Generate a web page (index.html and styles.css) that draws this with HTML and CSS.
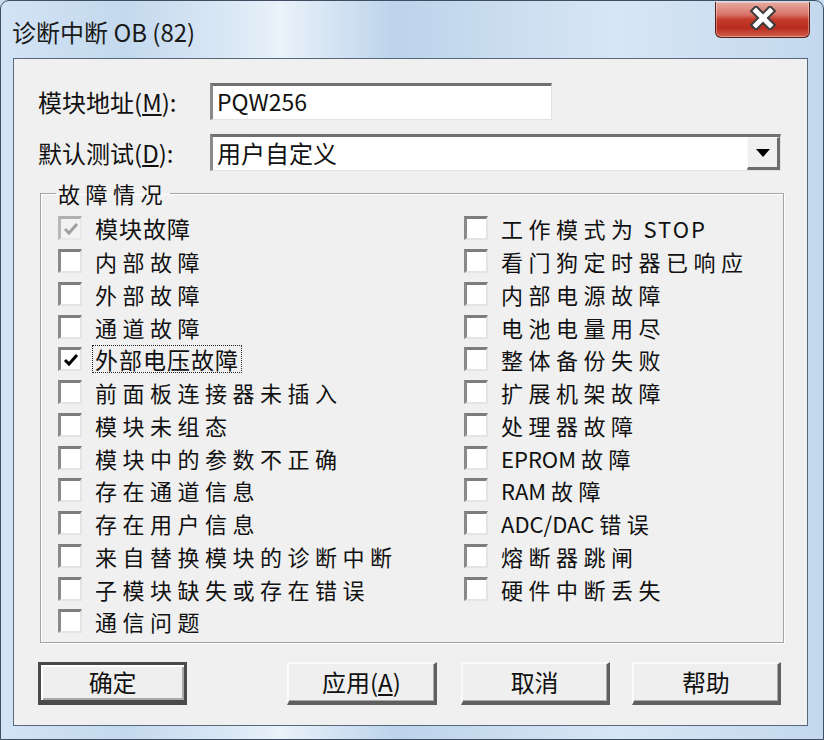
FILE: index.html
```html
<!DOCTYPE html>
<html lang="zh-CN">
<head>
<meta charset="utf-8">
<title>诊断中断 OB (82)</title>
<link rel="stylesheet" href="styles.css">
</head>
<body>
<div class="window">
  <div class="titlebar">
    <span class="title">诊断中断 OB (82)</span>
    <div class="close">
      <svg width="30" height="24" viewBox="0 0 30 24"><path d="M8 5 L22 19 M22 5 L8 19" stroke="#3d3d3d" stroke-width="9" stroke-linecap="square"/><path d="M8 5 L22 19 M22 5 L8 19" stroke="#ffffff" stroke-width="5" stroke-linecap="square"/></svg>
    </div>
  </div>
  <div class="client">
    <div class="field-row">
      <label class="field-label">模块地址(<u>M</u>):</label>
      <div class="textbox">PQW256</div>
    </div>
    <div class="field-row row2">
      <label class="field-label">默认测试(<u>D</u>):</label>
      <div class="combo">
        <span class="combo-text">用户自定义</span>
        <span class="combo-btn"><svg width="14" height="8" viewBox="0 0 14 8"><path d="M0 0 H14 L7 8 Z" fill="#000"/></svg></span>
      </div>
    </div>
    <fieldset class="group">
      <legend class="group-title">故障情况</legend>
      <div class="cols">
        <div class="col col-left">
          <div class="item"><span class="box disabled checked"><svg width="18" height="18" viewBox="0 0 18 18"><path d="M3 9 L7 13 L15 4" stroke="#a0a0a0" stroke-width="3" fill="none"/></svg></span><span class="lbl tight gray-ish">模块故障</span></div>
          <div class="item"><span class="box"></span><span class="lbl">内部故障</span></div>
          <div class="item"><span class="box"></span><span class="lbl">外部故障</span></div>
          <div class="item"><span class="box"></span><span class="lbl">通道故障</span></div>
          <div class="item"><span class="box checked"><svg width="18" height="18" viewBox="0 0 18 18"><path d="M3 9 L7 13 L15 4" stroke="#000" stroke-width="3" fill="none"/></svg></span><span class="lbl tight focus">外部电压故障</span></div>
          <div class="item"><span class="box"></span><span class="lbl">前面板连接器未插入</span></div>
          <div class="item"><span class="box"></span><span class="lbl">模块未组态</span></div>
          <div class="item"><span class="box"></span><span class="lbl">模块中的参数不正确</span></div>
          <div class="item"><span class="box"></span><span class="lbl">存在通道信息</span></div>
          <div class="item"><span class="box"></span><span class="lbl">存在用户信息</span></div>
          <div class="item"><span class="box"></span><span class="lbl">来自替换模块的诊断中断</span></div>
          <div class="item"><span class="box"></span><span class="lbl">子模块缺失或存在错误</span></div>
          <div class="item"><span class="box"></span><span class="lbl">通信问题</span></div>
        </div>
        <div class="col col-right">
          <div class="item"><span class="box"></span><span class="lbl">工作模式为<span class="latin"> </span><span class="latin wide">STOP</span></span></div>
          <div class="item"><span class="box"></span><span class="lbl">看门狗定时器已响应</span></div>
          <div class="item"><span class="box"></span><span class="lbl">内部电源故障</span></div>
          <div class="item"><span class="box"></span><span class="lbl">电池电量用尽</span></div>
          <div class="item"><span class="box"></span><span class="lbl">整体备份失败</span></div>
          <div class="item"><span class="box"></span><span class="lbl">扩展机架故障</span></div>
          <div class="item"><span class="box"></span><span class="lbl">处理器故障</span></div>
          <div class="item"><span class="box"></span><span class="lbl"><span class="latin">EPROM </span>故障</span></div>
          <div class="item"><span class="box"></span><span class="lbl"><span class="latin">RAM </span>故障</span></div>
          <div class="item"><span class="box"></span><span class="lbl"><span class="latin">ADC/DAC </span>错误</span></div>
          <div class="item"><span class="box"></span><span class="lbl">熔断器跳闸</span></div>
          <div class="item"><span class="box"></span><span class="lbl">硬件中断丢失</span></div>
        </div>
      </div>
    </fieldset>
    <div class="buttons">
      <button class="btn default">确定</button>
      <button class="btn apply">应用(<u>A</u>)</button>
      <button class="btn cancel">取消</button>
      <button class="btn help">帮助</button>
    </div>
  </div>
</div>
</body>
</html>
```
FILE: styles.css
```css
html, body {
  margin: 0;
  padding: 0;
}
body {
  width: 824px;
  height: 740px;
  overflow: hidden;
  background: #c9dcef;
  font-family: "Noto Sans CJK SC", "Noto Sans", sans-serif;
  color: #111;
}
.window {
  width: 824px;
  height: 740px;
  box-sizing: border-box;
  border: 1px solid #3e4f63;
  border-radius: 9px 9px 0 0;
  background: linear-gradient(90deg, #d2e3f4 0%, #c4d9ee 15%, #dbe8f5 28%, #eaf2fa 34%, #bcd3eb 48%, #c9dcef 60%, #d7e6f4 75%, #c3d8ee 100%);
  display: flex;
  flex-direction: column;
  padding: 0 15px 13px 12px;
}
.titlebar {
  height: 57px;
  flex: none;
  display: flex;
  align-items: flex-start;
  margin: 0 -15px 0 -12px;
  padding: 0 13px 0 11px;
}
.title {
  font-size: 24px;
  line-height: 28px;
  padding-top: 17px;
  color: #1a1a1a;
}
.close {
  margin-left: auto;
  margin-top: 1px;
  width: 95px;
  height: 36px;
  box-sizing: border-box;
  border: 1px solid #5a1e18;
  border-top: none;
  border-radius: 0 0 6px 6px;
  background: linear-gradient(180deg, #e5aaa0 0%, #d9776b 35%, #c33b2c 50%, #b82d1f 75%, #d2604e 100%);
  box-shadow: inset 0 0 0 1px rgba(255,255,255,0.35);
  display: flex;
  align-items: center;
  justify-content: center;
  padding-bottom: 3px;
}
.client {
  flex: 1;
  border: 1px solid #56687c;
  background: #f0f0f0;
  padding: 0 26px 0 24px;
  box-sizing: border-box;
}
.field-row {
  display: flex;
  align-items: center;
  margin-top: 24px;
  height: 37px;
}
.field-row.row2 {
  margin-top: 14px;
}
.field-label {
  width: 172px;
  flex: none;
  font-size: 24px;
  line-height: 28px;
}
.textbox {
  width: 342px;
  height: 37px;
  box-sizing: border-box;
  background: #fff;
  border-style: solid;
  border-width: 3px 1px 1px 3px;
  border-color: #707070 #e2e2e2 #e2e2e2 #8a8a8a;
  font-size: 23px;
  line-height: 31px;
  padding-left: 4px;
}
.combo {
  width: 571px;
  height: 37px;
  box-sizing: border-box;
  background: #fff;
  border-style: solid;
  border-width: 3px 1px 1px 3px;
  border-color: #707070 #e2e2e2 #e2e2e2 #8a8a8a;
  display: flex;
  align-items: stretch;
}
.combo-text {
  flex: 1;
  font-size: 24px;
  line-height: 31px;
  padding-left: 4px;
}
.combo-btn {
  width: 33px;
  box-sizing: border-box;
  background: #f0f0f0;
  border-style: solid;
  border-width: 1px 3px 3px 1px;
  border-color: #f9f9f9 #6d6d6d #6d6d6d #f9f9f9;
  display: flex;
  align-items: center;
  justify-content: center;
}
.group {
  width: 744px;
  box-sizing: border-box;
  margin: 9px 0 0 2px;
  padding: 6px 0 4px 17px;
  border: 1px solid #a4a4a4;
  box-shadow: inset 1px 1px 0 #fff, 1px 1px 0 #fff;
  min-width: 0;
}
.group-title {
  font-size: 22px;
  line-height: 26px;
  letter-spacing: 5.5px;
  padding: 0 2px 0 2px;
  margin-left: -2px;
}
.cols {
  display: grid;
  grid-template-columns: 406px 1fr;
}
.col {
  display: flex;
  flex-direction: column;
}
.item {
  height: 32.75px;
  display: flex;
  align-items: center;
}
.box {
  width: 24px;
  height: 24px;
  flex: none;
  box-sizing: border-box;
  background: #fff;
  border-style: solid;
  border-width: 3px 2px 2px 3px;
  border-color: #7d7d7d #e4e4e4 #e4e4e4 #8a8a8a;
  display: flex;
  align-items: center;
  justify-content: center;
}
.box.disabled {
  background: #f2f2f2;
  border-color: #b0b0b0 #e8e8e8 #e8e8e8 #b8b8b8;
}
.lbl {
  margin-left: 11px;
  padding: 0 2px;
  font-size: 22px;
  line-height: 26px;
  letter-spacing: 5.5px;
  white-space: nowrap;
}
.lbl.tight {
  font-size: 23px;
  letter-spacing: 1px;
}
.lbl.focus {
  outline: 1px dotted #222;
  outline-offset: 0;
}
.latin {
  letter-spacing: 0;
}
.latin.wide {
  letter-spacing: 2px;
}
.buttons {
  display: flex;
  margin-top: 19px;
}
.btn {
  width: 150px;
  height: 43px;
  box-sizing: border-box;
  background: #efefef;
  font-family: "Noto Sans CJK SC", "Noto Sans", sans-serif;
  font-size: 24px;
  line-height: 28px;
  color: #111;
  padding: 0;
  border-style: solid;
  border-width: 2px 3px 4px 2px;
  border-color: #fafafa #5f5f5f #5f5f5f #fafafa;
  box-shadow: inset -1px -1px 0 #a8a8a8;
}
.btn.default {
  border: 3px solid #4a4a4a;
  border-bottom-width: 5px;
  box-shadow: inset 2px 2px 0 #fdfdfd, inset -2px -2px 0 #a8a8a8;
}
.btn.apply {
  margin-left: 100px;
}
.btn.cancel {
  margin-left: 24px;
}
.btn.help {
  margin-left: 22px;
}
```
